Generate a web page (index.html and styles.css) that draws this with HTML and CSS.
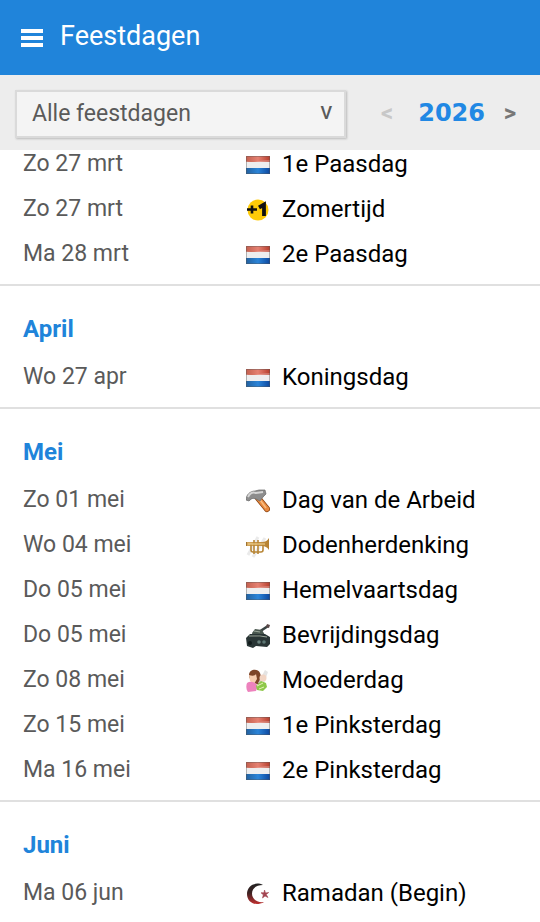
FILE: index.html
```html
<!DOCTYPE html>
<html lang="nl">
<head>
    <meta charset="UTF-8">
    <meta name="viewport" content="width=device-width, initial-scale=1.0">
    <title>Feestdagen</title>
    <link rel="stylesheet" href="styles.css">
</head>
<body>

    <!-- shared icons -->
    <svg class="icon-defs" aria-hidden="true">
        <defs>
            <linearGradient id="red" x1="0" y1="0" x2="1" y2="0">
                <stop offset="0" stop-color="#c3604f"/><stop offset=".5" stop-color="#e58172"/><stop offset="1" stop-color="#b73d2c"/>
            </linearGradient>
            <linearGradient id="blue" x1="0" y1="0" x2="1" y2="0">
                <stop offset="0" stop-color="#23619f"/><stop offset=".5" stop-color="#2b84d8"/><stop offset="1" stop-color="#0c479f"/>
            </linearGradient>
            <linearGradient id="moon" x1="0" y1="0" x2="0" y2="1">
                <stop offset="0" stop-color="#222"/><stop offset=".45" stop-color="#3c2222"/><stop offset="1" stop-color="#c03030"/>
            </linearGradient>
            <linearGradient id="brass" x1="0" y1="0" x2="1" y2="0">
                <stop offset="0" stop-color="#d5a75c"/><stop offset="1" stop-color="#b5802e"/>
            </linearGradient>
            <symbol id="flag" viewBox="0 0 24 24">
                <path d="M0 3h24v6H0z" fill="url(#red)"/>
                <path d="M0 9h24v6H0z" fill="#eeeeef"/>
                <path d="M0 15h24v6H0z" fill="url(#blue)"/>
                <path d="M0 8c7 3 14-1 24-1v2H0z" fill="#fff" opacity=".25"/>
                <path d="M.5 3.500h23v17H.5z" fill="none" stroke="#555" stroke-opacity=".4"/>
            </symbol>
            <symbol id="plus" viewBox="0 0 24 24">
                <circle cx="12" cy="12" r="10.500" fill="#fecb08"/>
                <path d="M1 11.500h10M6 7.500v8" stroke="#111" stroke-width="2.600"/>
                <path d="M13 9.500l5-3V18" fill="none" stroke="#111" stroke-width="3.800"/>
            </symbol>
            <symbol id="hammer" viewBox="0 0 24 24">
                <path d="M12 9l9 11" stroke="#87400f" stroke-width="6" stroke-linecap="round"/>
                <path d="M12 9l9 11" stroke="#e98a40" stroke-width="4.600" stroke-linecap="round"/>
                <path d="M12 8l8 11" stroke="#f9bd80" stroke-width="1.600"/>
                <path d="M0 11c0-5 4-9 9-9l4-1 6 0 1 4-3 3-3 4-4-2c-3-1-4-1-7 2z" fill="#8d8d8d" stroke="#686868" stroke-width=".7"/>
                <path d="M2 8c2-4 5-5 8-4l7-1" fill="none" stroke="#d6d6d6" stroke-width="2"/>
            </symbol>
            <symbol id="trumpet" viewBox="0 0 24 24">
                <path d="M2 21L12 3M7 23L19 4" stroke="#e2e2e2" stroke-width="3" opacity=".7"/>
                <path d="M1 8h15c3 0 5-1 7-4v12c-2-3-4-4-7-4H1z" fill="url(#brass)"/>
                <path d="M5 10v6q0 2 2 2h8q2 0 2-2v-6M8 6v14M12 6v14" fill="none" stroke="#b88636" stroke-width="1.600"/>
                <path d="M2 10h17" stroke="#f3d798"/>
                <path d="M0 8v4" stroke="#9d7435" stroke-width="2"/>
            </symbol>
            <symbol id="tank" viewBox="0 0 24 24">
                <path d="M13 8l9-6" stroke="#3a4444" stroke-width="2.600"/>
                <path d="M21 0l3 1-1 3-3-1z" fill="#5b4949"/>
                <path d="M6 9l3-4 7 1 3 5-3 4H7z" fill="#49574f"/>
                <path d="M0 14l4-4h15l5 3v7l-3 3-11-1-3 2-6-2z" fill="#293535"/>
                <path d="M8 7l6 1M3 12h11l7 1" stroke="#9ba79a" stroke-width="1.200"/>
                <circle cx="4" cy="19" r="2" fill="#111b1b"/>
                <circle cx="13" cy="18" r="1.800" fill="#69817d"/>
                <circle cx="18" cy="18" r="1.800" fill="#5c7673"/>
            </symbol>
            <symbol id="mother" viewBox="0 0 24 24">
                <path d="M3 6C3 0 12-1 14 4c2 4 0 8 1 12l-8-2C5 12 3 9 3 6z" fill="#7d4428"/>
                <path d="M3 6c3 1 6 1 7-1l1 5-3 5-4-3z" fill="#f7cdb0"/>
                <path d="M1 14c4-3 9 0 11 3l-2 5-8 1c-2-3-2-6-1-9z" fill="#ed82bd"/>
                <path d="M12 14l7-13 3 2-5 14z" fill="#ddd" opacity=".8"/>
                <circle cx="17" cy="9" r="3.500" fill="#f2d5c4"/>
                <path d="M10 17l5-5 5 2 1 4-4 4-6-1z" fill="#8ec84a"/>
                <path d="M11 17l6-3M13 20l5-2" stroke="#e5f3b7"/>
            </symbol>
            <symbol id="crescent" viewBox="0 0 24 24">
                <path d="M17 3C9-1 1 4 1 12s8 13 17 8C11 21 6 17 6 11.500S11 3 17 3z" fill="url(#moon)"/>
                <path d="M18.500 8l1 3 3.200-.5-2.500 2 1.800 3-3-1.500-2.500 2 .8-3.200-2.300-2 3-.1z" fill="#a34450" stroke="#a34450" stroke-width=".6"/>
            </symbol>
        </defs>
    </svg>

    <header class="header">
        <div class="title-bar">
            <button class="menu-button" type="button" aria-label="Menu">
                <span class="menu-line"></span>
                <span class="menu-line"></span>
                <span class="menu-line"></span>
            </button>
            <h1>Feestdagen</h1>
        </div>

        <div class="filter-bar">
            <div class="select-wrap">
                <select class="filter" aria-label="Soort feestdagen">
                    <option>Alle feestdagen</option>
                </select>
                <span class="select-arrow" aria-hidden="true">V</span>
            </div>
            <div class="year-nav">
                <button class="year-button" type="button" disabled>&lt;</button>
                <span class="year">2026</span>
                <button class="year-button" type="button">&gt;</button>
            </div>
        </div>
    </header>

    <main class="list">
        <section class="month">
            <table>
                <tr><td class="date">Zo 27 mrt</td><td class="day"><svg class="icon"><use href="#flag"/></svg>1e Paasdag</td></tr>
                <tr><td class="date">Zo 27 mrt</td><td class="day"><svg class="icon"><use href="#plus"/></svg>Zomertijd</td></tr>
                <tr><td class="date">Ma 28 mrt</td><td class="day"><svg class="icon"><use href="#flag"/></svg>2e Paasdag</td></tr>
            </table>
        </section>

        <section class="month">
            <h2>April</h2>
            <table>
                <tr><td class="date">Wo 27 apr</td><td class="day"><svg class="icon"><use href="#flag"/></svg>Koningsdag</td></tr>
            </table>
        </section>

        <section class="month">
            <h2>Mei</h2>
            <table>
                <tr><td class="date">Zo 01 mei</td><td class="day"><svg class="icon"><use href="#hammer"/></svg>Dag van de Arbeid</td></tr>
                <tr><td class="date">Wo 04 mei</td><td class="day"><svg class="icon"><use href="#trumpet"/></svg>Dodenherdenking</td></tr>
                <tr><td class="date">Do 05 mei</td><td class="day"><svg class="icon"><use href="#flag"/></svg>Hemelvaartsdag</td></tr>
                <tr><td class="date">Do 05 mei</td><td class="day"><svg class="icon"><use href="#tank"/></svg>Bevrijdingsdag</td></tr>
                <tr><td class="date">Zo 08 mei</td><td class="day"><svg class="icon"><use href="#mother"/></svg>Moederdag</td></tr>
                <tr><td class="date">Zo 15 mei</td><td class="day"><svg class="icon"><use href="#flag"/></svg>1e Pinksterdag</td></tr>
                <tr><td class="date">Ma 16 mei</td><td class="day"><svg class="icon"><use href="#flag"/></svg>2e Pinksterdag</td></tr>
            </table>
        </section>

        <section class="month">
            <h2>Juni</h2>
            <table>
                <tr><td class="date">Ma 06 jun</td><td class="day"><svg class="icon"><use href="#crescent"/></svg>Ramadan (Begin)</td></tr>
            </table>
        </section>
    </main>

</body>
</html>
```

FILE: styles.css
```css
* {
    box-sizing: border-box;
}

body {
    display: flex;
    flex-direction: column;
    height: 100vh;
    margin: 0;
    font-family: Roboto, sans-serif;
    font-size: 24px;
    color: #000;
    background-color: #fff;
}

.icon-defs {
    position: absolute;
    width: 0;
    height: 0;
}

button {
    padding: 0;
    border: none;
    background: none;
    cursor: pointer;
}

.header {
    position: relative;
    z-index: 1;
    flex: none;
}

.title-bar {
    display: flex;
    align-items: center;
    gap: 17px;
    height: 75px;
    padding: 0 21px;
    color: #fff;
    background-color: #2084da;
}

.menu-button {
    display: flex;
    flex-direction: column;
    gap: 3px;
    width: 22px;
}

.menu-line {
    height: 4px;
    background-color: #fff;
}

h1 {
    margin: 0;
    padding-bottom: 4px;
    font-size: 27px;
    font-weight: 400;
}

.filter-bar {
    display: flex;
    align-items: center;
    gap: 32px;
    height: 75px;
    padding: 3px 21px 0 15px;
    background-color: #ededed;
}

.select-wrap {
    position: relative;
    flex: 1;
}

.filter {
    display: block;
    width: 100%;
    height: 48px;
    padding: 0 40px 2px 15px;
    appearance: none;
    font-family: inherit;
    font-size: 23px;
    color: #5a5a5a;
    background-color: #f4f4f4;
    border: 2px solid #dadada;
    border-radius: 0;
    box-shadow: 1px 1px 2px #bbb;
}

.select-arrow {
    position: absolute;
    top: 12px;
    right: 14px;
    font-size: 18px;
    font-weight: 500;
    color: #5a5a5a;
    pointer-events: none;
}

.year-nav {
    display: flex;
    align-items: center;
    gap: 16px;
    padding-bottom: 3px;
}

.year-button {
    width: 18px;
    font-family: Roboto, sans-serif;
    font-size: 24px;
    font-weight: 700;
    color: #777;
}

.year-button:first-child {
    margin-right: 6px;
}

.year-button:disabled {
    color: #c8c8c8;
}

.year {
    font-family: "DejaVu Sans", sans-serif;
    font-weight: 700;
    color: #2188e4;
}

.list {
    flex: 1;
    margin-top: -8px;
    overflow-y: auto;
    scrollbar-width: none;
}

.month {
    padding-bottom: 7px;
}

.month + .month {
    padding-top: 20px;
    border-top: 2px solid #e0e0e0;
}

h2 {
    margin: 0 0 3px;
    padding-left: 23px;
    font-size: 24px;
    font-weight: 700;
    line-height: 46px;
    color: #2084da;
}

table {
    width: 100%;
    border-collapse: collapse;
    table-layout: fixed;
}

td {
    height: 45px;
    padding: 0 0 2px;
}

.date {
    width: 246px;
    padding-left: 23px;
    font-size: 23px;
    color: #5a5a5a;
}

.icon {
    width: 24px;
    height: 24px;
    margin-right: 12px;
    vertical-align: middle;
}
```
